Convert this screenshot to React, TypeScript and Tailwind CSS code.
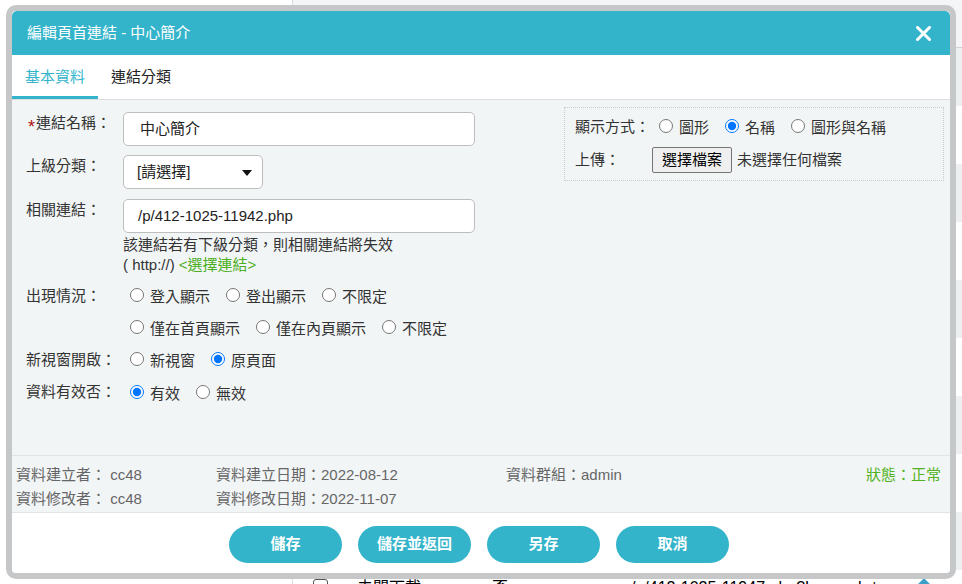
import React from "react";

const TEAL = "bg-[#33b4ca]";

function Radio({ name, label, checked, last }: { name: string; label: string; checked?: boolean; last?: boolean }) {
  return (
    <label className={"flex items-center " + (last ? "" : "mr-[16px]")}>
      <input
        type="radio"
        name={name}
        defaultChecked={checked}
        className="m-0 w-[14px] h-[14px] relative -top-[1px]"
      />
      <span className="ml-[6px] leading-[20px] relative top-[1px]">{label}</span>
    </label>
  );
}

function Label({ children }: { children: React.ReactNode }) {
  return <div className="w-[97px] shrink-0 leading-[22px] whitespace-nowrap">{children}</div>;
}

export default function App() {
  const rows = Array.from({ length: 10 });
  return (
    <div className="relative w-[962px] h-[584px] overflow-hidden bg-white font-['Liberation_Sans','Noto_Sans_CJK_TC',sans-serif] text-[#333]">
      {/* background page */}
      <div className="flex w-full h-full">
        <div className="w-[293px] shrink-0 h-full bg-white border-r border-[#dcdcdc]" />
        <div className="flex-1 flex flex-col">
          <div className="h-[48px] shrink-0 bg-[#f3f5f6] border-b border-[#cfd2d4]" />
          {rows.map((_, i) => (
            <div
              key={i}
              className={
                "h-[58px] shrink-0 flex items-start pt-[8px] text-[16px] text-black " +
                (i % 2 === 0 ? "bg-[#edf0f1]" : "bg-white")
              }
            >
              <span className="ml-[20px] mt-[1px] w-[15px] h-[15px] border border-[#555] rounded-[3px] shrink-0" />
              <span className="ml-[29px] w-[135px] leading-[20px]">未開下載</span>
              <span className="w-[139px] leading-[20px]">否</span>
              <span className="w-[286px] leading-[20px]">/p/412-1025-11947.php?Lang=zh-tw</span>
              <span className="w-[14px] h-[14px] mt-[3px] bg-[#3aa0c8] rotate-45 rounded-[2px]" />
            </div>
          ))}
        </div>
      </div>

      {/* modal */}
      <div className="absolute left-[6px] top-[5px] w-[950px] h-[574px] border-[6px] border-[#c5c7c8] rounded-[10px] bg-white flex flex-col overflow-hidden">
        {/* header */}
        <div className={"h-[44px] shrink-0 flex items-center justify-between pl-[15px] pr-[19px] rounded-t-[5px] " + TEAL}>
          <span className="text-white text-[15px] leading-[20px]">編輯頁首連結 - 中心簡介</span>
          <svg width="15" height="15" viewBox="0 0 15 15" className="mt-[1px]">
            <path d="M1.5 1.5 L13.5 13.5 M13.5 1.5 L1.5 13.5" stroke="white" strokeWidth="3" strokeLinecap="square" />
          </svg>
        </div>
        {/* tabs */}
        <div className="h-[45px] shrink-0 flex bg-white border-b border-[#dedede] text-[15px]">
          <div className="h-full flex items-center px-[13px] pt-[3px] border-b-[3px] border-[#33b4ca] text-[#33b4ca]">基本資料</div>
          <div className="h-full flex items-center px-[13px] text-[#222]">連結分類</div>
        </div>
        {/* body */}
        <div className="h-[356px] shrink-0 bg-[#f2f5f6] border-b border-[#e0e4e6] flex text-[15px] text-[#333]">
          <div className="w-[470px] pl-[14px] pt-[12px]">
            <div className="flex h-[34px]">
              <Label>
                <span className="relative top-[5px] text-[18px] text-[#b01010] ml-[2px] mr-[1px] leading-[10px]">*</span>
                連結名稱：
              </Label>
              <div className="w-[352px] h-[34px] border border-[#bdbdbd] rounded-[5px] bg-white pl-[16px] flex items-center text-[#222]">中心簡介</div>
            </div>
            <div className="flex h-[34px] mt-[9px]">
              <Label>上級分類：</Label>
              <div className="w-[140px] h-[34px] border border-[#bdbdbd] rounded-[5px] bg-white pl-[13px] pr-[10px] flex items-center justify-between text-[#222]">
                <span>[請選擇]</span>
                <svg width="10" height="6" viewBox="0 0 10 6" className="mt-[1px]">
                  <path d="M0 0 L10 0 L5 6 Z" fill="#111" />
                </svg>
              </div>
            </div>
            <div className="flex h-[34px] mt-[10px]">
              <Label>相關連結：</Label>
              <div className="w-[352px] h-[34px] border border-[#bdbdbd] rounded-[5px] bg-white pl-[14px] flex items-center text-[#222]">/p/412-1025-11942.php</div>
            </div>
            <div className="pl-[97px] mt-[2px] leading-[20px]">
              <div>該連結若有下級分類，則相關連結將失效</div>
              <div>
                ( http://) <span className="text-[#4caf1e]">&lt;選擇連結&gt;</span>
              </div>
            </div>
            <div className="flex mt-[5px]">
              <div className="w-[97px] shrink-0 h-[32px] flex items-center">出現情況：</div>
              <div className="pl-[7px]">
                <div className="h-[32px] flex items-center">
                  <Radio name="show" label="登入顯示" />
                  <Radio name="show" label="登出顯示" />
                  <Radio name="show" label="不限定" last />
                </div>
                <div className="h-[32px] flex items-center">
                  <Radio name="page" label="僅在首頁顯示" />
                  <Radio name="page" label="僅在內頁顯示" />
                  <Radio name="page" label="不限定" last />
                </div>
              </div>
            </div>
            <div className="flex h-[32px] items-center">
              <div className="w-[97px] shrink-0">新視窗開啟：</div>
              <div className="pl-[7px] flex items-center">
                <Radio name="win" label="新視窗" />
                <Radio name="win" label="原頁面" checked last />
              </div>
            </div>
            <div className="flex h-[33px] items-center">
              <div className="w-[97px] shrink-0">資料有效否：</div>
              <div className="pl-[7px] flex items-center">
                <Radio name="valid" label="有效" checked />
                <Radio name="valid" label="無效" last />
              </div>
            </div>
          </div>
          <div className="ml-auto mr-[6px] mt-[7px] w-[380px] h-[74px] border border-dotted border-[#c8cccf] pl-[10px] pt-[8px]">
            <div className="flex items-center h-[22px]">
              <div className="w-[84px] shrink-0">顯示方式：</div>
              <Radio name="mode" label="圖形" />
              <Radio name="mode" label="名稱" checked />
              <Radio name="mode" label="圖形與名稱" last />
            </div>
            <div className="flex items-center h-[26px] mt-[9px]">
              <div className="w-[77px] shrink-0">上傳：</div>
              <div className="h-[26px] px-[9px] flex items-center bg-[#efefef] border border-[#767676] rounded-[2px] text-black">選擇檔案</div>
              <span className="ml-[5px]">未選擇任何檔案</span>
            </div>
          </div>
        </div>
        {/* meta */}
        <div className="h-[57px] shrink-0 bg-[#f2f5f6] border-b border-[#e0e4e6] pl-[4px] pr-[9px] pt-[7px] text-[15px] text-[#666]">
          <div className="flex h-[24px] items-center">
            <div className="w-[200px]">資料建立者：&nbsp;cc48</div>
            <div className="w-[290px]">資料建立日期：2022-08-12</div>
            <div className="flex-1">資料群組：admin</div>
            <div className="text-[#52b31f]">狀態：正常</div>
          </div>
          <div className="flex h-[24px] items-center">
            <div className="w-[200px]">資料修改者：&nbsp;cc48</div>
            <div className="w-[290px]">資料修改日期：2022-11-07</div>
          </div>
        </div>
        {/* footer */}
        <div className="flex-1 bg-white flex justify-center gap-[16px] pt-[13px] pr-[4px]">
          {["儲存", "儲存並返回", "另存", "取消"].map((t) => (
            <div
              key={t}
              className={"w-[113px] h-[37px] rounded-full flex items-center justify-center text-white text-[15px] font-bold " + TEAL}
            >
              {t}
            </div>
          ))}
        </div>
      </div>
    </div>
  );
}
